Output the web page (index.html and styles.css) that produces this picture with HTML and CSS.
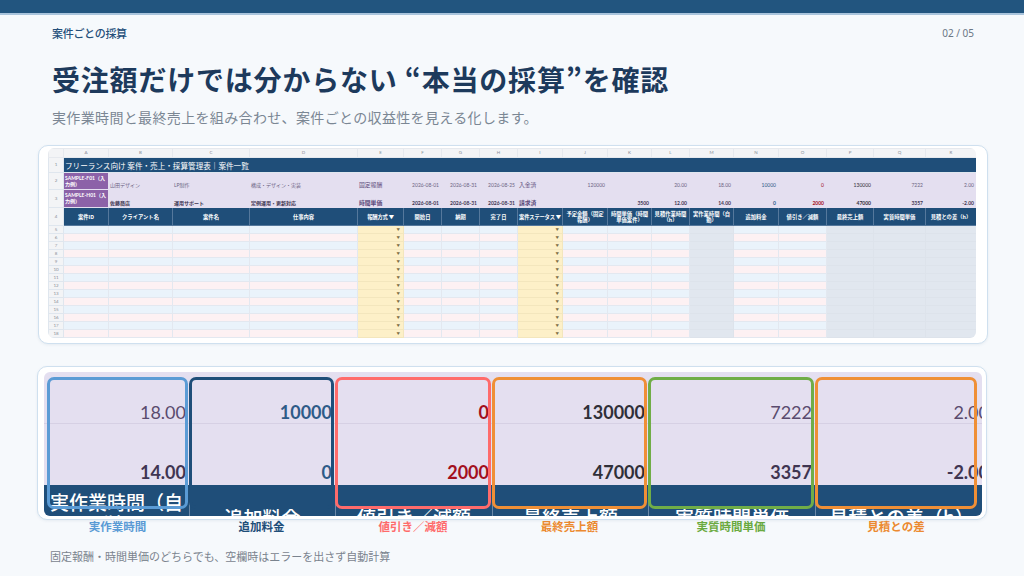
FILE: index.html
```html
<!DOCTYPE html>
<html lang="ja">
<head>
<meta charset="utf-8">
<title>案件ごとの採算</title>
<link rel="stylesheet" href="styles.css">
</head>
<body>
<div class="topbar"></div>
<div class="head">
  <span class="section">案件ごとの採算</span>
  <span class="page">02 / 05</span>
</div>
<h1 class="title">受注額だけでは分からない “本当の採算”を確認</h1>
<p class="subtitle">実作業時間と最終売上を組み合わせ、案件ごとの収益性を見える化します。</p>

<section class="sheet-card">
  <div class="sheet-wrap">
    <table class="sheet">
      <colgroup>
        <col class="c-rn"><col class="c-a"><col class="c-b"><col class="c-c"><col class="c-d"><col class="c-e"><col class="c-f"><col class="c-g"><col class="c-h"><col class="c-i"><col class="c-j"><col class="c-k"><col class="c-l"><col class="c-m"><col class="c-n"><col class="c-o"><col class="c-p"><col class="c-q"><col class="c-r">
      </colgroup>
      <thead>
        <tr class="letters"><th></th><th>A</th><th>B</th><th>C</th><th>D</th><th>E</th><th>F</th><th>G</th><th>H</th><th>I</th><th>J</th><th>K</th><th>L</th><th>M</th><th>N</th><th>O</th><th>P</th><th>Q</th><th>R</th></tr>
      </thead>
      <tbody>
        <tr class="r1"><th class="rn">1</th><td class="sheet-title" colspan="18">フリーランス向け 案件・売上・採算管理表｜案件一覧</td></tr>
        <tr class="sample r2">
          <th class="rn">2</th><td class="sid">SAMPLE-F01（入力例）</td><td>山田デザイン</td><td>LP制作</td><td>構成・デザイン・実装</td><td class="big">固定報酬</td><td class="num">2026-08-01</td><td class="num">2026-08-31</td><td class="num">2026-08-25</td><td class="big">入金済</td><td class="num">120000</td><td class="num"></td><td class="num">20.00</td><td class="num">18.00</td><td class="num add">10000</td><td class="num disc">0</td><td class="num fin">130000</td><td class="num">7222</td><td class="num">2.00</td>
        </tr>
        <tr class="sample r3">
          <th class="rn">3</th><td class="sid">SAMPLE-H01（入力例）</td><td>佐藤商店</td><td>運用サポート</td><td>定例運用・更新対応</td><td class="big">時間単価</td><td class="num">2026-08-01</td><td class="num">2026-08-31</td><td class="num">2026-08-31</td><td class="big">請求済</td><td class="num"></td><td class="num">3500</td><td class="num">12.00</td><td class="num">14.00</td><td class="num add">0</td><td class="num disc">2000</td><td class="num fin">47000</td><td class="num">3357</td><td class="num">-2.00</td>
        </tr>
        <tr class="hdr">
          <th class="rn">4</th><td>案件ID</td><td>クライアント名</td><td>案件名</td><td>仕事内容</td><td class="one">報酬方式 ▼</td><td>開始日</td><td>納期</td><td>完了日</td><td class="one">案件ステータス ▼</td><td>予定金額（固定報酬）</td><td>時間単価（時間単価案件）</td><td>見積作業時間（h）</td><td>実作業時間（自動）</td><td>追加料金</td><td>値引き／減額</td><td>最終売上額</td><td>実質時間単価</td><td>見積との差（h）</td>
        </tr>
      </tbody>
      <tbody class="data">
        <tr><th class="rn">5</th><td></td><td></td><td></td><td></td><td class="y">▼</td><td></td><td></td><td></td><td class="y">▼</td><td></td><td></td><td></td><td class="g"></td><td></td><td></td><td class="g"></td><td class="g"></td><td class="g"></td></tr>
        <tr><th class="rn">6</th><td></td><td></td><td></td><td></td><td class="y">▼</td><td></td><td></td><td></td><td class="y">▼</td><td></td><td></td><td></td><td class="g"></td><td></td><td></td><td class="g"></td><td class="g"></td><td class="g"></td></tr>
        <tr><th class="rn">7</th><td></td><td></td><td></td><td></td><td class="y">▼</td><td></td><td></td><td></td><td class="y">▼</td><td></td><td></td><td></td><td class="g"></td><td></td><td></td><td class="g"></td><td class="g"></td><td class="g"></td></tr>
        <tr><th class="rn">8</th><td></td><td></td><td></td><td></td><td class="y">▼</td><td></td><td></td><td></td><td class="y">▼</td><td></td><td></td><td></td><td class="g"></td><td></td><td></td><td class="g"></td><td class="g"></td><td class="g"></td></tr>
        <tr><th class="rn">9</th><td></td><td></td><td></td><td></td><td class="y">▼</td><td></td><td></td><td></td><td class="y">▼</td><td></td><td></td><td></td><td class="g"></td><td></td><td></td><td class="g"></td><td class="g"></td><td class="g"></td></tr>
        <tr><th class="rn">10</th><td></td><td></td><td></td><td></td><td class="y">▼</td><td></td><td></td><td></td><td class="y">▼</td><td></td><td></td><td></td><td class="g"></td><td></td><td></td><td class="g"></td><td class="g"></td><td class="g"></td></tr>
        <tr><th class="rn">11</th><td></td><td></td><td></td><td></td><td class="y">▼</td><td></td><td></td><td></td><td class="y">▼</td><td></td><td></td><td></td><td class="g"></td><td></td><td></td><td class="g"></td><td class="g"></td><td class="g"></td></tr>
        <tr><th class="rn">12</th><td></td><td></td><td></td><td></td><td class="y">▼</td><td></td><td></td><td></td><td class="y">▼</td><td></td><td></td><td></td><td class="g"></td><td></td><td></td><td class="g"></td><td class="g"></td><td class="g"></td></tr>
        <tr><th class="rn">13</th><td></td><td></td><td></td><td></td><td class="y">▼</td><td></td><td></td><td></td><td class="y">▼</td><td></td><td></td><td></td><td class="g"></td><td></td><td></td><td class="g"></td><td class="g"></td><td class="g"></td></tr>
        <tr><th class="rn">14</th><td></td><td></td><td></td><td></td><td class="y">▼</td><td></td><td></td><td></td><td class="y">▼</td><td></td><td></td><td></td><td class="g"></td><td></td><td></td><td class="g"></td><td class="g"></td><td class="g"></td></tr>
        <tr><th class="rn">15</th><td></td><td></td><td></td><td></td><td class="y">▼</td><td></td><td></td><td></td><td class="y">▼</td><td></td><td></td><td></td><td class="g"></td><td></td><td></td><td class="g"></td><td class="g"></td><td class="g"></td></tr>
        <tr><th class="rn">16</th><td></td><td></td><td></td><td></td><td class="y">▼</td><td></td><td></td><td></td><td class="y">▼</td><td></td><td></td><td></td><td class="g"></td><td></td><td></td><td class="g"></td><td class="g"></td><td class="g"></td></tr>
        <tr><th class="rn">17</th><td></td><td></td><td></td><td></td><td class="y">▼</td><td></td><td></td><td></td><td class="y">▼</td><td></td><td></td><td></td><td class="g"></td><td></td><td></td><td class="g"></td><td class="g"></td><td class="g"></td></tr>
        <tr><th class="rn">18</th><td></td><td></td><td></td><td></td><td class="y">▼</td><td></td><td></td><td></td><td class="y">▼</td><td></td><td></td><td></td><td class="g"></td><td></td><td></td><td class="g"></td><td class="g"></td><td class="g"></td></tr>
      </tbody>
    </table>
  </div>
</section>

<section class="zoom-card">
  <div class="zoom">
    <div class="zc zr2 zm">18.00</div>
    <div class="zc zr2 zn add">10000</div>
    <div class="zc zr2 zo disc">0</div>
    <div class="zc zr2 zp fin">130000</div>
    <div class="zc zr2 zq">7222</div>
    <div class="zc zr2 zr">2.00</div>
    <div class="zc zr3 zm">14.00</div>
    <div class="zc zr3 zn add">0</div>
    <div class="zc zr3 zo disc">2000</div>
    <div class="zc zr3 zp fin">47000</div>
    <div class="zc zr3 zq">3357</div>
    <div class="zc zr3 zr">-2.00</div>
    <div class="zh zh-first zh-two">実作業時間（自動）</div>
    <div class="zh">追加料金</div>
    <div class="zh">値引き／減額</div>
    <div class="zh">最終売上額</div>
    <div class="zh">実質時間単価</div>
    <div class="zh">見積との差（h）</div>
  </div>
  <div class="marks">
    <div class="mark lane-m blue"></div>
    <div class="mark lane-n navy"></div>
    <div class="mark lane-o red"></div>
    <div class="mark lane-p orange"></div>
    <div class="mark lane-q green"></div>
    <div class="mark lane-r orange"></div>
  </div>
</section>

<div class="labels">
  <span class="lane-m t-blue">実作業時間</span>
  <span class="lane-n t-navy">追加料金</span>
  <span class="lane-o t-red">値引き／減額</span>
  <span class="lane-p t-orange">最終売上額</span>
  <span class="lane-q t-green">実質時間単価</span>
  <span class="lane-r t-orange">見積との差</span>
</div>

<p class="foot">固定報酬・時間単価のどちらでも、空欄時はエラーを出さず自動計算</p>
</body>
</html>
```

FILE: styles.css
```css
* { box-sizing: border-box; }
html, body { margin: 0; padding: 0; }
body {
  width: 1024px;
  height: 576px;
  overflow: hidden;
  background: #f6f9fc;
  font-family: "Noto Sans CJK JP", "Noto Sans", sans-serif;
  color: #1d3a5c;
}

.topbar {
  height: 15px;
  background: #22557f;
  border-bottom: 2px solid #a9c4dc;
}

.head {
  display: flex;
  justify-content: space-between;
  align-items: center;
  height: 14px;
  margin: 11px 50px 0 52px;
}
.section {
  font-size: 11px;
  line-height: 14px;
  font-weight: 500;
  color: #244f7a;
  letter-spacing: -0.3px;
}
.page {
  font-family: "Noto Sans", sans-serif;
  font-size: 10px;
  color: #6b7785;
}

.title {
  margin: 21px 0 0 52px;
  font-size: 28px;
  line-height: 36px;
  font-weight: 700;
  color: #1d3a5c;
  letter-spacing: 0.8px;
}
.subtitle {
  margin: 10px 0 0 52px;
  font-size: 14px;
  line-height: 20px;
  color: #7b8794;
  letter-spacing: 0.35px;
}

/* ---------- top spreadsheet ---------- */
.sheet-card {
  margin: 18px 0 0 38px;
  width: 950px;
  background: #ffffff;
  border: 1px solid #cfe0ef;
  border-radius: 10px;
  padding: 2px 11px 5px 9px;
  box-shadow: 0 1px 3px rgba(40, 80, 120, 0.08);
}
.sheet-wrap {
  width: 928px;
  border-radius: 6px;
  overflow: hidden;
}
.sheet {
  width: 928px;
  table-layout: fixed;
  border-collapse: collapse;
  font-family: "Lato", "Noto Sans CJK JP", sans-serif;
  font-size: 5px;
  line-height: 6px;
  color: #6c6483;
}
.sheet th, .sheet td {
  padding: 0 1px;
  border: 1px solid #dfe6ee;
  overflow: hidden;
  font-weight: 400;
}
.c-rn { width: 15px; }
.c-a { width: 45px; }
.c-b { width: 64px; }
.c-c { width: 77px; }
.c-d { width: 108px; }
.c-e { width: 46px; }
.c-f { width: 38px; }
.c-g { width: 38px; }
.c-h { width: 38px; }
.c-i { width: 45px; }
.c-j { width: 45px; }
.c-k { width: 44px; }
.c-l { width: 38px; }
.c-m { width: 44px; }
.c-n { width: 45px; }
.c-o { width: 48px; }
.c-p { width: 47px; }
.c-q { width: 52px; }
.c-r { width: 51px; }

.letters { height: 9px; }
.letters th {
  background: #f3f4f6;
  color: #8a8f98;
  font-size: 4.5px;
  text-align: center;
  border-color: #e6e9ee;
}
.rn {
  background: #f3f4f6;
  color: #8a8f98;
  font-size: 4.5px;
  text-align: center;
  border-color: #e6e9ee;
}

.r1 { height: 15px; }
.sheet-title {
  background: #1f4e79;
  color: #ffffff;
  font-family: "Noto Sans CJK JP", sans-serif;
  font-size: 7.6px;
  line-height: 9px;
  font-weight: 500;
  padding-left: 2px;
  white-space: nowrap;
  border-color: #1f4e79;
}

.sample td {
  background: #e4dff0;
  border-color: #e4dff0;
  vertical-align: bottom;
  white-space: nowrap;
  padding-bottom: 1px;
}
.r2 { height: 17px; }
.r3 { height: 18px; }
.r3 td { font-weight: 700; color: #3f3552; }
.sample td.sid {
  background: #8c62a8;
  color: #ffffff;
  font-weight: 700;
  white-space: normal;
  vertical-align: middle;
  line-height: 6px;
  border-color: #e4dff0;
}
.sample td.big { font-size: 5.8px; color: #5a4a7a; }
.sample td.num { text-align: right; padding-right: 2px; }
.add { color: #2e5b88 !important; font-weight: 700; }
.disc { color: #a3101e !important; font-weight: 700; }
.fin { color: #2f2f38 !important; font-weight: 700; }

.hdr { height: 18px; }
.hdr td {
  background: #1f4e79;
  color: #ffffff;
  font-family: "Noto Sans CJK JP", sans-serif;
  font-weight: 700;
  font-size: 5.3px;
  line-height: 6px;
  text-align: center;
  vertical-align: middle;
  border-color: #55789c;
  border-top-color: #1f4e79;
}
.hdr td.one { white-space: nowrap; letter-spacing: -0.2px; }

.data tr { height: 8px; }
.data tr:nth-child(odd) td { background: #eaf3fb; }
.data tr:nth-child(even) td { background: #fdf1f3; }
.data td {
  border-color: #e3e8f0;
  font-size: 3.5px;
  line-height: 6px;
}
.data tr td.y {
  background: #fdf0c8;
  color: #7d6d45;
  text-align: right;
  padding-right: 3px;
  border-color: #f3e6bd;
}
.data tr td.g {
  background: #e1e7ef;
  border-color: #dde3eb;
}

/* ---------- zoomed panel ---------- */
.zoom-card {
  position: relative;
  margin: 22px 0 0 37px;
  width: 950px;
  height: 154px;
  background: #ffffff;
  border: 1px solid #cfe0ef;
  border-radius: 10px;
  padding: 5px 4px 3px 6px;
  box-shadow: 0 1px 3px rgba(40, 80, 120, 0.08);
}
.zoom {
  width: 938px;
  height: 144px;
  overflow: hidden;
  border-radius: 6px;
  background: #e4dff0;
  display: grid;
  grid-template-columns: 145px 146px 157px 156px 167px 172px;
  grid-template-rows: 52px 61px 59px;
  font-family: "Lato", sans-serif;
  font-size: 18px;
  line-height: 20px;
  color: #5a4b6e;
}
.zc {
  display: flex;
  justify-content: flex-end;
  align-items: flex-end;
  padding-right: 3px;
  white-space: nowrap;
}
.zr2 {
  border-bottom: 1px solid #d6d0e4;
  padding-bottom: 1px;
}
.zr3 {
  padding-bottom: 3px;
  font-weight: 700;
  color: #3f3552;
}
.zc.zr { padding-right: 0; margin-right: -2px; }

.zh {
  background: #1f4e79;
  color: #ffffff;
  font-family: "Noto Sans CJK JP", sans-serif;
  font-size: 19px;
  line-height: 22px;
  font-weight: 500;
  display: flex;
  align-items: center;
  justify-content: center;
  text-align: center;
  border-left: 1px solid #6a88a8;
  padding-top: 4px;
}
.zh-first { border-left: 0; }
.zh-two { padding: 0 4px 4px; }

.marks {
  position: absolute;
  left: 9px;
  top: 10px;
  height: 132px;
  display: flex;
  gap: 1px;
}
.mark {
  height: 132px;
  border: 3px solid;
  border-radius: 7px;
}
.lane-m { width: 141px; }
.lane-n { width: 145px; }
.lane-o { width: 156px; }
.lane-p { width: 155px; }
.lane-q { width: 166px; }
.lane-r { width: 162px; }
.blue { border-color: #5b9bd5; }
.navy { border-color: #1f4e79; }
.red { border-color: #ff6b6b; }
.orange { border-color: #ef8f36; }
.green { border-color: #70ad47; }

.labels {
  display: flex;
  gap: 1px;
  padding-left: 47px;
  height: 13px;
}
.labels span {
  text-align: center;
  font-size: 11.5px;
  line-height: 13px;
  font-weight: 700;
}
.t-blue { color: #5b9bd5; }
.t-navy { color: #1f4e79; }
.t-red { color: #ff6b6b; }
.t-orange { color: #ec8a30; }
.t-green { color: #6aaa3f; }

.foot {
  margin: 15px 0 0 50px;
  font-size: 11px;
  line-height: 16px;
  color: #7a838e;
}
```
